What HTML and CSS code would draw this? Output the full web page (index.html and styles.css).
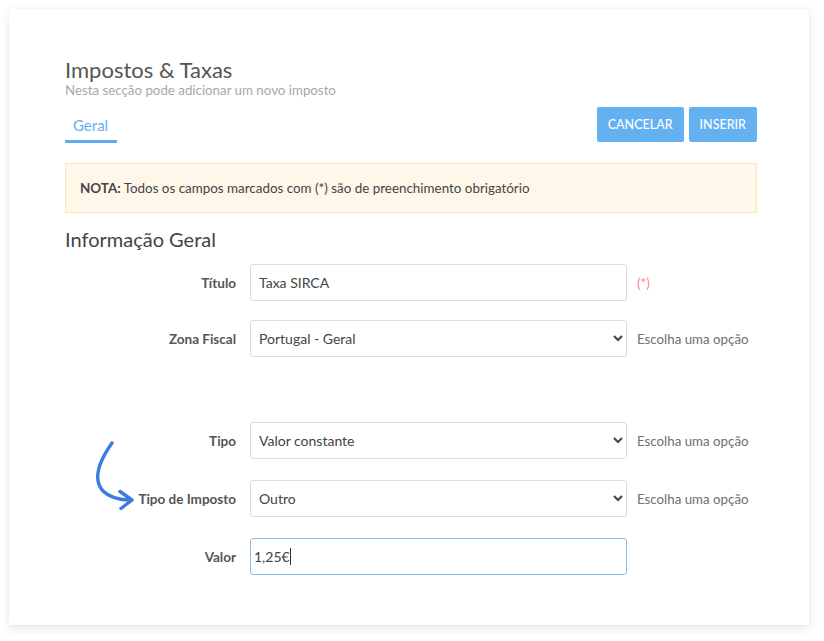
FILE: index.html
```html
<!DOCTYPE html>
<html lang="pt">
<head>
<meta charset="utf-8">
<title>Impostos &amp; Taxas</title>
<link rel="stylesheet" href="styles.css">
</head>
<body>
<div class="card">
  <header class="header">
    <h1 class="title">Impostos &amp; Taxas</h1>
    <p class="subtitle">Nesta secção pode adicionar um novo imposto</p>
    <div class="tabrow">
      <div class="tabs"><span class="tab active">Geral</span></div>
      <div class="actions">
        <button class="btn">CANCELAR</button>
        <button class="btn">INSERIR</button>
      </div>
    </div>
  </header>

  <div class="nota"><span><b>NOTA:</b> Todos os campos marcados com (*) são de preenchimento obrigatório</span></div>

  <h2 class="section">Informação Geral</h2>

  <form class="form">
    <div class="row">
      <label class="label">Título</label>
      <input class="field" type="text" value="Taxa SIRCA">
      <span class="req">(*)</span>
    </div>
    <div class="row">
      <label class="label">Zona Fiscal</label>
      <select class="field"><option>Portugal - Geral</option></select>
      <span class="help">Escolha uma opção</span>
    </div>
    <div class="row row-spaced">
      <label class="label">Tipo</label>
      <select class="field"><option>Valor constante</option></select>
      <span class="help">Escolha uma opção</span>
    </div>
    <div class="row">
      <label class="label">Tipo de Imposto</label>
      <select class="field"><option>Outro</option></select>
      <span class="help">Escolha uma opção</span>
    </div>
    <div class="row">
      <label class="label">Valor</label>
      <div class="field focus">1,25€<span class="caret"></span></div>
    </div>
  </form>

  <svg class="arrow" viewBox="89 434 60 90" width="60" height="90" aria-hidden="true">
    <path d="M112 443 C100 460 92 479 103 491 C110 498 120 500 131 500" fill="none" stroke="#3b7ddd" stroke-width="3.4" stroke-linecap="round"/>
    <path d="M120 491.5 L132 500 L121 508.5" fill="none" stroke="#3b7ddd" stroke-width="3.4" stroke-linecap="round" stroke-linejoin="round"/>
  </svg>
</div>
</body>
</html>
```
FILE: styles.css
```css
* { box-sizing: border-box; }
html, body { margin: 0; padding: 0; background: #ffffff; }
body {
  padding: 9px;
  font-family: Lato, "Open Sans", "Liberation Sans", sans-serif;
  color: #444;
}
.card {
  position: relative;
  width: 800px;
  height: 616px;
  background: #fff;
  box-shadow: 0 4px 10px rgba(70, 90, 130, 0.13), 0 0 3px rgba(70, 90, 130, 0.06);
  padding: 48px 52px 0 56px;
}
.title {
  margin: 0;
  font-size: 22px;
  line-height: 25px;
  font-weight: 400;
  color: #555;
}
.subtitle {
  margin: 0;
  font-size: 13.3px;
  line-height: 16px;
  color: #a8a8a8;
}
.tabrow {
  margin-top: 9px;
  display: flex;
  justify-content: space-between;
  align-items: flex-end;
}
.tabs { display: flex; }
.tab {
  display: block;
  padding: 8px 9px 5px 8px;
  font-size: 15px;
  line-height: 20px;
  color: #67aef2;
  border-bottom: 3px solid #5eabf1;
}
.actions {
  display: flex;
  gap: 5px;
  margin-bottom: 1px;
}
.btn {
  height: 35px;
  padding: 0 11px;
  border: none;
  border-radius: 2px;
  background: #64b1f2;
  color: #fff;
  font-family: inherit;
  font-size: 12.5px;
  font-weight: 500;
}
.nota {
  margin-top: 20px;
  height: 50px;
  padding: 0 14px;
  display: flex;
  align-items: center;
  background: #fff8ea;
  border: 1px solid #fbe7b8;
  font-size: 13.4px;
  color: #444;
}
.nota b { font-weight: 700; }
.section {
  margin: 14px 0 0;
  font-size: 20px;
  line-height: 25px;
  font-weight: 400;
  color: #444;
}
.form {
  margin: 12px 0 0;
  display: flex;
  flex-direction: column;
  gap: 19px;
}
.row {
  display: flex;
  align-items: center;
}
.row-spaced { margin-top: 46px; }
.row:nth-child(4), .row:nth-child(5) { margin-top: 2px; }
.label {
  width: 171px;
  margin-right: 14px;
  text-align: right;
  font-size: 13.5px;
  font-weight: 700;
  color: #555;
}
.field {
  width: 377px;
  height: 37px;
  padding: 0 8px;
  border: 1px solid #dcdcdc;
  border-radius: 3px;
  background: #fff;
  font-family: inherit;
  font-size: 14px;
  color: #444;
}
select.field { padding: 0 4px; }
.field.focus {
  display: flex;
  align-items: center;
  padding: 0 0 0 3px;
  border-color: #8fbde9;
}
.caret {
  display: inline-block;
  width: 1px;
  height: 17px;
  background: #333;
}
.req {
  margin-left: 10px;
  font-size: 13.3px;
  color: #f28b8b;
}
.help {
  margin-left: 10px;
  font-size: 13.3px;
  color: #6f6f6f;
}
.arrow {
  position: absolute;
  left: 80px;
  top: 425px;
}
```
